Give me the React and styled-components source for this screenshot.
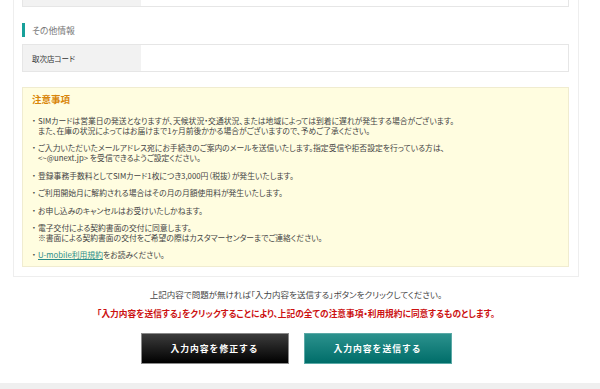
import React from "react";
import styled, { createGlobalStyle } from "styled-components";

const GlobalStyle = createGlobalStyle`
  html, body {
    margin: 0;
    padding: 0;
    background: #fff;
    overflow: hidden;
  }
  body {
    font-family: "Noto Sans CJK JP", "Noto Sans", sans-serif;
    font-feature-settings: "palt";
    color: #333;
  }
`;

const Page = styled.div`
  width: 600px;
  height: 389px;
  overflow: hidden;
  display: flex;
  flex-direction: column;
`;

const Panel = styled.div`
  margin-top: -21px;
  margin-left: 13px;
  width: 566px;
  box-sizing: border-box;
  border: 1px solid #eee;
  border-top: none;
  padding: 0 9px 9px 8px;
`;

const Row = styled.div`
  display: grid;
  grid-template-columns: 118px 1fr;
  height: 28px;
  box-sizing: border-box;
  border: 1px solid #e6e6e6;
  background: #fff;
`;

const Label = styled.div`
  background: #f2f2f2;
  display: flex;
  align-items: center;
  padding-left: 9px;
  font-size: 7.5px;
  color: #333;
`;

const Value = styled.div`
  background: #fff;
`;

const SectionHead = styled.div`
  display: flex;
  align-items: center;
  gap: 7px;
  height: 14px;
  margin: 16px 0 7px;
  font-size: 8.8px;
  color: #777;

  &::before {
    content: "";
    width: 3px;
    height: 14px;
    background: #17a09a;
  }
`;

const Notice = styled.div`
  margin-top: 15px;
  background: #fffde0;
  border: 1px solid #f0ecd0;
  padding: 4px 10px 6px 9px;
`;

const NoticeTitle = styled.div`
  font-size: 9.5px;
  line-height: 14px;
  font-weight: bold;
  color: #d9860b;
  margin-bottom: 10px;
`;

const List = styled.ul`
  list-style: none;
  margin: 0;
  padding: 0;
  font-size: 7.8px;
  line-height: 10px;
  color: #444;
`;

const Item = styled.li`
  display: flex;
  margin-bottom: ${(p) => (p.$last ? 0 : "7.4px")};
`;

const Bullet = styled.span`
  flex: 0 0 6px;
`;

const Link = styled.a`
  color: #2c8d8a;
  text-decoration: underline;
`;

const Footer = styled.div`
  margin-left: 13px;
  width: 566px;
  display: flex;
  flex-direction: column;
  align-items: center;
`;

const Guide = styled.p`
  margin: 10px 0 0;
  font-size: 8.5px;
  line-height: 14px;
  color: #444;
`;

const Warning = styled.p`
  margin: 6px 0 0;
  font-size: 8.7px;
  line-height: 14px;
  font-weight: bold;
  color: #cc1111;
`;

const Buttons = styled.div`
  display: flex;
  gap: 15px;
  margin-top: 12px;
`;

const Button = styled.button`
  width: 148px;
  height: 31px;
  border: 1px solid ${(p) => (p.$primary ? "#5aa9a6" : "#8a8a8a")};
  background: ${(p) =>
    p.$primary
      ? "linear-gradient(#2b918d, #006d69)"
      : "linear-gradient(#3c3c3c, #000)"};
  color: #fff;
  font-family: inherit;
  font-size: 8.8px;
  font-weight: bold;
  letter-spacing: 1px;
  cursor: pointer;
`;

const Band = styled.div`
  margin-top: auto;
  height: 6px;
  background: #efefef;
`;

export default function App() {
  return (
    <Page>
      <GlobalStyle />
      <Panel>
        <Row>
          <Label />
          <Value />
        </Row>
        <SectionHead>その他情報</SectionHead>
        <Row>
          <Label>取次店コード</Label>
          <Value />
        </Row>
        <Notice>
          <NoticeTitle>注意事項</NoticeTitle>
          <List>
            <Item>
              <Bullet>・</Bullet>
              <span>
                SIMカードは営業日の発送となりますが、天候状況・交通状況、または地域によっては到着に遅れが発生する場合がございます。
                <br />
                また、在庫の状況によってはお届けまで1ヶ月前後かかる場合がございますので、予めご了承ください。
              </span>
            </Item>
            <Item>
              <Bullet>・</Bullet>
              <span>
                ご入力いただいたメールアドレス宛にお手続きのご案内のメールを送信いたします。指定受信や拒否設定を行っている方は、
                <br />
                &lt;~@unext.jp&gt; を受信できるようご設定ください。
              </span>
            </Item>
            <Item>
              <Bullet>・</Bullet>
              <span>登録事務手数料としてSIMカード1枚につき3,000円（税抜）が発生いたします。</span>
            </Item>
            <Item>
              <Bullet>・</Bullet>
              <span>ご利用開始月に解約される場合はその月の月額使用料が発生いたします。</span>
            </Item>
            <Item>
              <Bullet>・</Bullet>
              <span>お申し込みのキャンセルはお受けいたしかねます。</span>
            </Item>
            <Item>
              <Bullet>・</Bullet>
              <span>
                電子交付による契約書面の交付に同意します。
                <br />
                ※書面による契約書面の交付をご希望の際はカスタマーセンターまでご連絡ください。
              </span>
            </Item>
            <Item $last>
              <Bullet>・</Bullet>
              <span>
                <Link href="#">U-mobile利用規約</Link>をお読みください。
              </span>
            </Item>
          </List>
        </Notice>
      </Panel>
      <Footer>
        <Guide>上記内容で問題が無ければ「入力内容を送信する」ボタンをクリックしてください。</Guide>
        <Warning>
          「入力内容を送信する」をクリックすることにより、上記の全ての注意事項・利用規約に同意するものとします。
        </Warning>
        <Buttons>
          <Button>入力内容を修正する</Button>
          <Button $primary>入力内容を送信する</Button>
        </Buttons>
      </Footer>
      <Band />
    </Page>
  );
}
